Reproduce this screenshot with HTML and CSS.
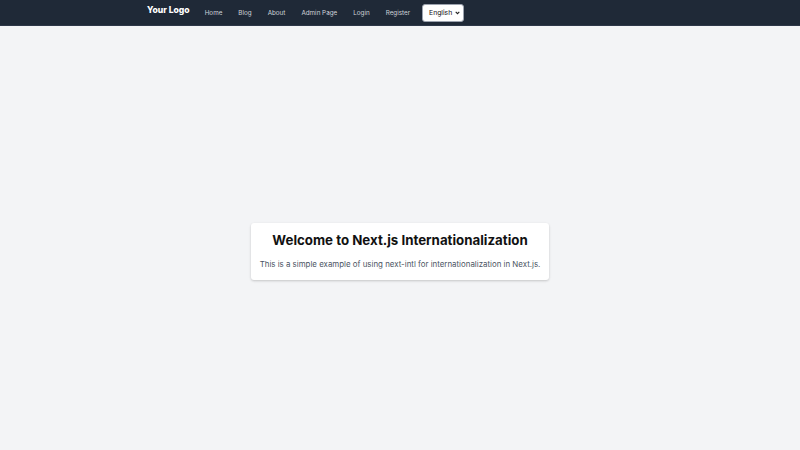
FILE: index.html
```html
<!DOCTYPE html>
<html lang="en">
<head>
<meta charset="utf-8">
<title>Next.js Internationalization</title>
<link rel="stylesheet" href="styles.css">
</head>
<body>
<nav class="navbar">
  <div class="nav-inner">
    <a class="logo" href="#">Your Logo</a>
    <ul class="nav-links">
      <li><a href="#">Home</a></li>
      <li><a href="#">Blog</a></li>
      <li><a href="#">About</a></li>
      <li><a href="#">Admin Page</a></li>
      <li><a href="#">Login</a></li>
      <li><a href="#">Register</a></li>
    </ul>
    <div class="lang">
      <span class="lang-text">English</span>
      <svg class="chev" width="5" height="4" viewBox="0 0 5 4"><path d="M0.7 0.8 L2.5 2.7 L4.3 0.8" fill="none" stroke="#222" stroke-width="1.1"/></svg>
    </div>
  </div>
</nav>
<main class="main">
  <div class="card">
    <h1 class="title">Welcome to Next.js Internationalization</h1>
    <p class="desc">This is a simple example of using next-intl for internationalization in Next.js.</p>
  </div>
</main>
</body>
</html>
```
FILE: styles.css
```css
* { box-sizing: border-box; }
html, body { margin: 0; padding: 0; }
html { overflow: hidden; }
body {
  font-family: "Inter", "DejaVu Sans", sans-serif;
  background: #f3f4f6;
  color: #111;
}
.navbar {
  height: 26px;
  background: #1f2937;
  border-bottom: 1px solid #2d3748;
}
.nav-inner {
  height: 100%;
  display: flex;
  align-items: center;
  padding-left: 147px;
}
.logo {
  color: #fff;
  font-weight: 800;
  font-size: 8.6px;
  line-height: 10px;
  text-decoration: none;
  margin-right: 15px;
  margin-top: -6px;
  white-space: nowrap;
}
.nav-links {
  display: flex;
  list-style: none;
  margin: 0;
  padding: 0;
  gap: 16px;
  font-size: 6.3px;
  line-height: 8px;
}
.nav-links a {
  color: #d1d5db;
  text-decoration: none;
  white-space: nowrap;
}
.lang {
  margin-left: 12px;
  width: 42px;
  height: 18px;
  flex: none;
  background: #fff;
  border: 1px solid #9ca3af;
  border-radius: 3px;
  display: flex;
  align-items: center;
  padding-left: 6px;
  gap: 3px;
}
.lang-text {
  font-size: 6.8px;
  color: #111;
  white-space: nowrap;
}
.chev { flex: none; }
.main {
  height: 424px;
  padding-top: 26px;
  display: flex;
  align-items: center;
  justify-content: center;
}
.card {
  width: 298px;
  height: 57px;
  background: #fff;
  border-radius: 3px;
  box-shadow: 0 1px 3px rgba(0,0,0,0.12), 0 1px 2px rgba(0,0,0,0.08);
  display: flex;
  flex-direction: column;
  align-items: center;
  padding-top: 9px;
}
.title {
  margin: 0;
  font-size: 13.3px;
  line-height: 17px;
  font-weight: 700;
  color: #111;
  white-space: nowrap;
}
.desc {
  margin: 10px 0 0;
  font-size: 7.9px;
  line-height: 10px;
  color: #4b5563;
  white-space: nowrap;
}
```
